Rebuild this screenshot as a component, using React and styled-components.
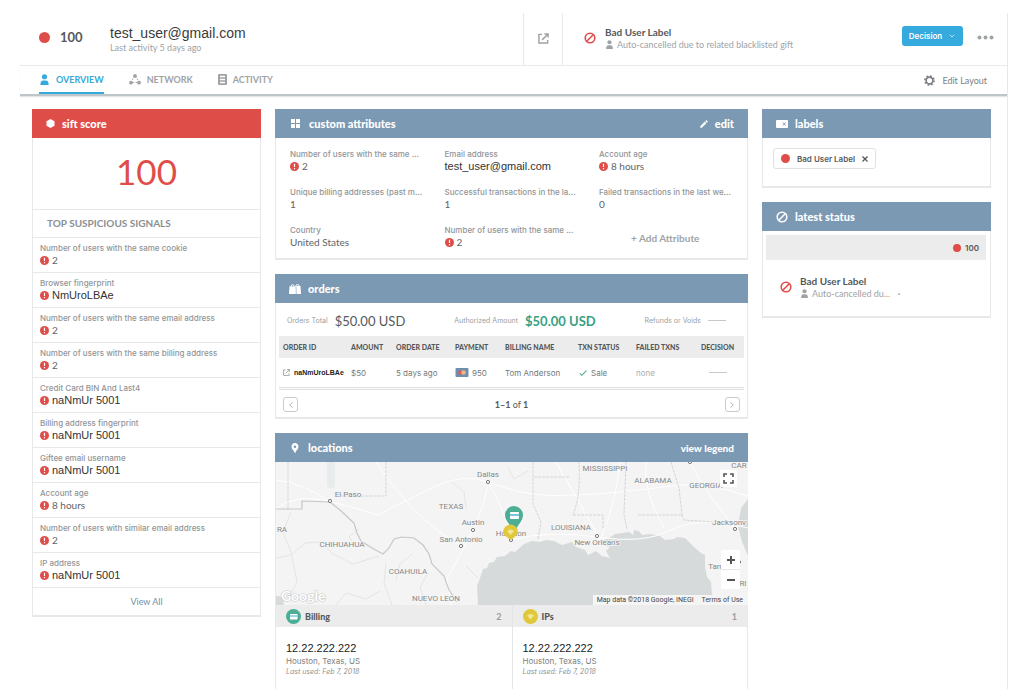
import React from 'react';
import styled, { createGlobalStyle } from 'styled-components';
import { MdEdit, MdLocationPin, MdCheck } from 'react-icons/md';
import { FiChevronLeft, FiChevronRight, FiChevronDown } from 'react-icons/fi';

const GlobalStyle = createGlobalStyle`
    * {
        box-sizing: border-box;
    }
    body {
        margin: 0;
        background-color: #fff;
        color: #55595b;
        font-family: Lato, 'Open Sans', sans-serif;
        font-size: 10px;
    }
    button {
        font-family: inherit;
        padding: 0;
        border: 0;
        background: none;
        cursor: pointer;
    }
    a {
        color: inherit;
        text-decoration: none;
    }
    h1, h2, h3, p, dl, dd, ul {
        margin: 0;
        padding: 0;
    }
    svg {
        display: block;
        flex: none;
    }
`;

const RED = '#df4d49';
const BLUE = '#7b99b3';
const plain = "'Liberation Sans', Arial, sans-serif";
const small = "Inter, 'Open Sans', sans-serif";

const Page = styled.div`
    margin: 13px 16px 10px 20px;
    border-right: 1px solid #e6e8e9;
`;

const Header = styled.header`
    display: flex;
    height: 53px;
    border-bottom: 1px solid #e8e9e9;
`;

const UserArea = styled.div`
    flex: 1;
    display: flex;
    align-items: center;
    padding: 0 0 4px 19px;
`;

const Dot = styled.span`
    flex: none;
    width: ${props => props.$size}px;
    height: ${props => props.$size}px;
    border-radius: 50%;
    background-color: ${RED};
`;

const HeaderScore = styled.strong`
    width: 50px;
    margin-left: 10px;
    font-size: 13px;
    line-height: 16px;
`;

const UserName = styled.h1`
    padding-top: 3px;
    font-family: ${plain};
    font-size: 14px;
    font-weight: 400;
    line-height: 18px;
    color: #3b3b3b;
`;

const Muted = styled.p`
    display: flex;
    align-items: center;
    gap: 3px;
    font-size: 9px;
    line-height: 11px;
    color: #a0a3a5;
`;

const OpenLink = styled.a`
    display: flex;
    align-items: center;
    justify-content: center;
    width: 40px;
    padding-bottom: 2px;
    border: solid #e8e9e9;
    border-width: 0 1px;
    color: #a0a3a5;
`;

const StatusArea = styled.div`
    display: flex;
    align-items: center;
    width: 444px;
    padding: 0 13px 2px 21px;
    gap: 9px;
    color: ${RED};
`;

const StatusText = styled.div`
    flex: 1;
    min-width: 0;
    color: #55595b;
`;

const StatusName = styled.h3`
    font-size: 10px;
    line-height: 13px;
    font-weight: 700;
`;

const DecisionButton = styled.button`
    display: flex;
    align-items: center;
    justify-content: center;
    gap: 6px;
    width: 61px;
    height: 20px;
    margin-bottom: 4px;
    border-radius: 3px;
    background-color: #36a9dd;
    color: #fff;
    font-family: ${small};
    font-size: 8px;
    font-weight: 600;
`;

const MoreButton = styled.button`
    display: flex;
    margin: 0 0 2px 5px;
    color: #a0a3a5;
`;

const TabBar = styled.nav`
    display: flex;
    align-items: stretch;
    height: 30px;
    padding: 0 20px 0 19px;
    gap: 25px;
    border-bottom: 2px solid #bfc6c9;
    box-shadow: 0 1px 1px #e3e6e7;
`;

const Tab = styled.a`
    display: flex;
    align-items: center;
    gap: 6px;
    font-size: 9px;
    font-weight: 700;
    color: ${props => (props.$active ? '#36a9dd' : '#a0a3a5')};
    border-bottom: 2px solid ${props => (props.$active ? '#36a9dd' : 'transparent')};
`;

const EditLayout = styled.button`
    display: flex;
    align-items: center;
    gap: 7px;
    margin-left: auto;
    font-size: 9px;
    color: #7b7f82;
`;

const Columns = styled.main`
    display: grid;
    grid-template-columns: 229px minmax(0, 1fr) 229px;
    gap: 14px;
    align-items: start;
    padding: 13px 16px 0 12px;
`;

const Column = styled.div`
    display: flex;
    flex-direction: column;
    gap: 14px;
`;

const Card = styled.section`
    border: 1px solid #e6e8e9;
    border-top: 0;
    border-bottom-width: ${props => (props.$open ? 0 : 2)}px;
`;

const CardHeader = styled.header`
    display: flex;
    align-items: center;
    height: 29px;
    margin: 0 -1px;
    padding: 0 14px;
    gap: 7px;
    background-color: ${props => props.$color || BLUE};
    color: #fff;
`;

const CardTitle = styled.h2`
    font-size: 11px;
    line-height: 14px;
    font-weight: 900;
`;

const HeaderButton = styled.button`
    display: flex;
    align-items: center;
    gap: 6px;
    margin-left: auto;
    font-size: ${props => (props.$large ? 11 : 10)}px;
    font-weight: 900;
    color: #fff;
`;

const BigScore = styled.p`
    height: 72px;
    padding-top: 13px;
    text-align: center;
    font-size: 35px;
    line-height: 40px;
    color: ${RED};
    border-bottom: 1px solid #e6e8e9;
`;

const SignalsTitle = styled.h3`
    height: 28px;
    padding-left: 14px;
    font-size: 10px;
    line-height: 27px;
    font-weight: 700;
    color: #8b8f92;
    border-bottom: 1px solid #e6e8e9;
`;

const Signal = styled.li`
    list-style: none;
    height: 35px;
    padding: 5px 7px;
    border-bottom: 1px solid #e6e8e9;
`;

const FieldLabel = styled.p`
    font-family: ${small};
    font-size: 8px;
    line-height: 11px;
    font-weight: 500;
    color: #929597;
    white-space: nowrap;
`;

const FieldValue = styled.p`
    display: flex;
    align-items: center;
    gap: 3px;
    font-family: ${props => (props.$plain ? plain : 'inherit')};
    font-size: ${props => (props.$plain ? 11 : 10)}px;
    line-height: 12px;
    color: ${props => (props.$plain ? '#333' : '#5f6365')};
`;

const ViewAll = styled.a`
    display: block;
    line-height: 27px;
    text-align: center;
    font-size: 9px;
    color: #7390a8;
`;

const Attributes = styled.div`
    display: grid;
    grid-template-columns: 1fr 1fr 148px;
    grid-auto-rows: 38px;
    padding: 11px 0 0 14px;
    height: 120px;
`;

const AddAttribute = styled.button`
    justify-self: start;
    margin: 0 0 12px 32px;
    font-size: 10px;
    font-weight: 700;
    color: #a0a3a5;
`;

const Totals = styled.dl`
    display: flex;
    align-items: center;
    justify-content: space-between;
    height: 33px;
    padding: 2px 21px 0 11px;
`;

const Total = styled.div`
    display: flex;
    align-items: center;
    gap: 7px;
    color: #9b9ea0;
    font-family: ${small};
    font-size: 7px;
    dd {
        font-family: Lato, sans-serif;
        font-size: 13px;
        color: ${props => (props.$green ? '#37a184' : '#55595b')};
        font-weight: ${props => (props.$green ? 700 : 400)};
    }
`;

const Dash = styled.span`
    display: block;
    width: 18px;
    height: 1px;
    background-color: #c6c9cb;
`;

const TableWrap = styled.div`
    margin: 0 3px;
    border-bottom: 3px double #dcdedf;
`;

const Table = styled.table`
    width: 100%;
    table-layout: fixed;
    border-collapse: collapse;
    font-family: ${small};
    font-size: 8px;
    white-space: nowrap;
    th {
        height: 22px;
        padding: 0 4px;
        background-color: #ececec;
        text-align: left;
        font-family: Lato, sans-serif;
        font-size: 7px;
        font-weight: 900;
    }
    td {
        height: 29px;
        padding: 0 4px;
        color: #75797b;
    }
`;

const Empty = styled.span`
    color: #a9acae;
`;

const Inline = styled.span`
    display: flex;
    align-items: center;
    gap: 3px;
`;

const DashCell = styled.div`
    padding-left: 8px;
`;

const OrderId = styled.a`
    display: flex;
    align-items: center;
    gap: 4px;
    font-family: ${plain};
    font-size: 7px;
    font-weight: 700;
    color: #222;
    svg {
        color: #a0a3a5;
    }
`;

const CardNumber = styled.span`
    font-size: 8px;
`;

const Pager = styled.div`
    display: flex;
    align-items: center;
    justify-content: space-between;
    height: 27px;
    padding: 2px 7px 0;
    font-size: 9px;
`;

const PagerButton = styled.button`
    display: flex;
    align-items: center;
    justify-content: center;
    width: 15px;
    height: 15px;
    border: 1px solid #c9cccd;
    border-radius: 3px;
    color: #a0a3a5;
`;

const MapArea = styled.div`
    position: relative;
    height: 143px;
    overflow: hidden;
    margin-right: -1px;
`;

const MapControls = styled.div`
    position: absolute;
    right: ${props => props.$right}px;
    top: ${props => props.$top}px;
    display: flex;
    flex-direction: column;
    border-radius: 1px;
    background-color: #fff;
`;

const MapButton = styled.button`
    display: flex;
    align-items: center;
    justify-content: center;
    width: ${props => props.$width}px;
    height: ${props => props.$height}px;
    color: #555;
    & + & {
        border-top: 1px solid #e6e6e6;
    }
`;

const Attribution = styled.p`
    position: absolute;
    right: 0;
    bottom: 0;
    display: flex;
    gap: 8px;
    padding: 0 5px 0 4px;
    font-family: Roboto, sans-serif;
    font-size: 7px;
    line-height: 10px;
    color: #444;
    background-color: #f5f5f5;
`;

const Places = styled.div`
    display: grid;
    grid-template-columns: 1fr 1fr;
`;

const Place = styled.div`
    & + & {
        border-left: 1px solid #e3e5e6;
    }
`;

const PlaceHeader = styled.div`
    display: flex;
    align-items: center;
    gap: 4px;
    height: 22px;
    padding: 0 10px;
    background-color: #ececec;
    font-size: 9px;
    font-weight: 900;
    span {
        margin-left: auto;
        color: #999c9e;
        font-weight: 700;
    }
`;

const PlaceBody = styled.div`
    height: 62px;
    padding: 15px 10px 0;
    font-family: ${small};
    font-size: 8px;
    line-height: 12px;
    color: #7b7f82;
    strong {
        display: block;
        font-family: ${plain};
        font-size: 11px;
        line-height: 13px;
        font-weight: 400;
        color: #222;
    }
    em {
        display: block;
        font-size: 7px;
        line-height: 10px;
        color: #8f9294;
    }
`;

const LabelsBody = styled.div`
    height: 48px;
    padding: 10px;
`;

const Chip = styled.div`
    display: inline-flex;
    align-items: center;
    height: 21px;
    padding: 0 7px;
    gap: 7px;
    border: 1px solid #dfe1e2;
    border-radius: 3px;
    font-family: ${small};
    font-size: 8px;
    font-weight: 600;
`;

const StatusBody = styled.div`
    height: 85px;
    padding: 4px 4px 0 3px;
`;

const StatusScore = styled.div`
    display: flex;
    align-items: center;
    justify-content: flex-end;
    gap: 4px;
    height: 25px;
    padding-right: 7px;
    background-color: #ececec;
    font-family: ${small};
    font-size: 8px;
    font-weight: 600;
`;

const StatusRow = styled.div`
    display: flex;
    align-items: center;
    gap: 8px;
    padding: 15px 0 0 14px;
    color: ${RED};
`;

function PersonIcon({ size = 10 }) {
    return (
        <svg width={size} height={size} viewBox="0 0 12 12" fill="currentColor" aria-hidden="true">
            <circle cx="6" cy="3" r="2.8" />
            <path d="M1.5 12C1.5 8.500 2.500 7 4.500 7h3C9.500 7 10.500 8.500 10.500 12z" />
        </svg>
    );
}

function BlockIcon() {
    return (
        <svg width="12" height="12" viewBox="0 0 12 12" fill="none" stroke="currentColor" strokeWidth="1.600" aria-hidden="true">
            <circle cx="6" cy="6" r="4.800" />
            <path d="M2.800 9.200 9.200 2.800" />
        </svg>
    );
}

function NetworkIcon() {
    return (
        <svg width="12" height="11" viewBox="0 0 12 11" aria-hidden="true">
            <path d="M5.500 2 2 8.500h8L6.500 2" fill="none" stroke="currentColor" strokeWidth="1" strokeDasharray="1.500 1.500" />
            <circle cx="6" cy="2" r="1.900" fill="currentColor" />
            <circle cx="2" cy="8.700" r="1.900" fill="currentColor" />
            <circle cx="10" cy="8.700" r="1.900" fill="currentColor" />
        </svg>
    );
}

function ActivityIcon() {
    return (
        <svg width="9" height="11" viewBox="0 0 9 11" aria-hidden="true">
            <rect width="9" height="11" rx="1" fill="#a0a3a5" />
            <path d="M2 2.500h5M2 5.500h5M2 8.500h5" stroke="#fff" strokeWidth="1.300" />
        </svg>
    );
}

function GearIcon() {
    return (
        <svg width="11" height="11" viewBox="0 0 12 12" fill="none" stroke="currentColor" aria-hidden="true">
            <circle cx="6" cy="6" r="3.700" strokeWidth="1.800" />
            <circle cx="6" cy="6" r="5" strokeWidth="1.700" strokeDasharray="1.960 1.960" />
        </svg>
    );
}

function OpenIcon({ size }) {
    return (
        <svg width={size} height={size} viewBox="0 0 12 12" fill="none" stroke="currentColor" strokeWidth="1.600" aria-hidden="true">
            <path d="M4.500 1.500H1v9.500h9.500V7.500M7 1h4v4M11 1 4.500 7.500" />
        </svg>
    );
}

function AlertIcon() {
    return (
        <svg width="9" height="9" viewBox="0 0 9 9" aria-label="Warning">
            <circle cx="4.500" cy="4.500" r="4.500" fill={RED} />
            <path d="M4.500 1.800v3.200M4.500 6v1.300" stroke="#fff" strokeWidth="1.200" />
        </svg>
    );
}

function HexIcon() {
    return (
        <svg width="9" height="9" viewBox="0 0 9 9" fill="currentColor" aria-hidden="true">
            <path d="M4.500 0 8.500 2.200v4.600L4.500 9l-4-2.200V2.200z" />
        </svg>
    );
}

function TilesIcon() {
    return (
        <svg width="13" height="9" viewBox="-2 0 13 9" fill="currentColor" aria-hidden="true">
            <path d="M0 0h4v4H0zM5 0h4v4H5zM0 5h4v4H0zM5 5h4v4H5z" />
        </svg>
    );
}

function BagsIcon() {
    return (
        <svg width="12" height="10" viewBox="0 0 12 10" aria-hidden="true">
            <path d="M.5 2.500h6V10H0zM6 2h5.500l.5 8H6z" fill="#fff" />
            <path d="M2 3V1.500q1.500-1.500 3 0V3M7 2.500V1.200q1.500-1.500 3 0v1.300" fill="none" stroke="#fff" />
            <path d="M7 2.500 7.300 10" stroke={BLUE} strokeWidth=".6" />
        </svg>
    );
}

function LabelIcon() {
    return (
        <svg width="12" height="8" viewBox="0 0 12 8" aria-hidden="true">
            <rect width="12" height="8" rx="1" fill="#fff" />
            <path d="m7 2.500 2.500 3M9.500 2.500 7 5.500" stroke={BLUE} />
        </svg>
    );
}

function CardBadge() {
    return (
        <svg width="15" height="15" viewBox="0 0 15 15" aria-hidden="true">
            <circle cx="7.500" cy="7.500" r="7.500" fill="#4caf94" />
            <rect x="4" y="5" width="7.500" height="5.500" rx=".6" fill="#fff" />
            <path d="M4 7h7.500" stroke="#74c7df" strokeWidth="1.400" />
        </svg>
    );
}

function WifiBadge() {
    return (
        <svg width="15" height="15" viewBox="0 0 15 15" aria-hidden="true">
            <circle cx="7.500" cy="7.500" r="7.500" fill="#e1c83a" />
            <path d="M4 6.500q3.500-3 7 0L7.500 10.500z" fill="#f3e694" />
        </svg>
    );
}

const cities = [
    { name: 'Dallas', x: 212, y: 15, cx: 212, cy: 20 },
    { name: 'El Paso', x: 72, y: 35, cx: 54, cy: 39 },
    { name: 'Austin', x: 197, y: 63, cx: 197, cy: 68 },
    { name: 'San Antonio', x: 185, y: 80, cx: 185, cy: 84 },
    { name: 'Houston', x: 235, y: 74, cx: 235, cy: 78 },
    { name: 'New Orleans', x: 321, y: 83, cx: 321, cy: 74 },
    { name: 'Jacksonv', x: 453, y: 63, cx: 459, cy: 67 },
    { name: 'Tam', x: 440, y: 107, cx: 463, cy: 100 },
];

const regions = [
    { name: 'TEXAS', x: 175, y: 47 },
    { name: 'CHIHUAHUA', x: 66, y: 85 },
    { name: 'COAHUILA', x: 132, y: 112 },
    { name: 'NUEVO LEON', x: 160, y: 139 },
    { name: 'RA', x: 6, y: 70 },
    { name: 'MISSISSIPPI', x: 329, y: 9 },
    { name: 'ALABAMA', x: 377, y: 21 },
    { name: 'GEORGIA', x: 430, y: 26 },
    { name: 'LOUISIANA', x: 295, y: 68 },
    { name: 'CAR', x: 463, y: 6 },
    { name: 'RI', x: 467, y: 124 },
];

function RegionMap() {
    return (
        <svg width="100%" height="143" viewBox="0 0 472 143" preserveAspectRatio="xMidYMid slice" role="img" aria-label="Map of the Gulf coast">
            <rect width="472" height="143" fill="#f4f4f4" />
            <g fill="#d7dadb">
                <path d="M202 143 201 124l3-8 3-9 4-1 2-5 5-1 3-5 8-1 6-5 4 1 9-8 8-3 8 1 6-2 8 1 8 4 10-3 4 5 9 3 3 5 8-4 6 5 8 2-4-7 4-4-6-2-3-4 8-3 6-4 14-2 4 3 1-5 5 1 3 4 8-1 10 2 5 4 9-1 3-2 8 1 8 8 8 7 4 2v12l2 10 4 5 1 12 5 7 8 5z" />
                <path d="m472 37-7 9-3 18 4 16 6 14z" />
                <path d="M0 134q8-1 8 9H0z" />
                <path d="M51 0h8v24q-2 5-8 0z" fill="#e9ecec" />
            </g>
            <g fill="none" stroke="#fff" strokeWidth="1">
                <path d="M0 47q20-16 52-8t50 14q30-16 58-29t52-4 44 12 62 0 76-8 78 10" />
                <path d="M212 20q-2 20-14 45t-11 22l-16 30 4 26M212 20q16 26 24 57M235 78q38-10 86-3t74-7 77-2" />
                <path d="M0 18q30 4 54 22M280 0q20 34 42 74M344 0q-4 40-18 74M414 0q15 30 46 67M370 0q-4 28 18 66M100 0q40 60 86 84" />
            </g>
            <g fill="none" stroke="#e3e5e5" strokeWidth="1">
                <path d="M0 96l15-3 14-12 16-1 12 12 20 10 26-8M60 143l10-12 20 6 14-8M116 143l-8-22 2-20M150 143l-6-18 8-14M190 104l12 12M15 50l-8 20 8 20 6 30-10 20" />
                <path d="m80 84-7-9 10-8M136 92l-12 10-4 16M176 20l12 10 2 16M232 5l6 12 14-8" />
            </g>
            <g fill="none" stroke="#d4d6d6" strokeDasharray="3 1">
                <path d="M12 0v47M110 0v34H65M257 0v42l8 18-3 17M297 53h30v14M297 53q8-20 6-53M350 0l-2 53 3 14M362 53h44l2 5 29 2M395 0l8 26 3 27M258 15h36" />
            </g>
            <path d="M0 47h26v-8l28 1 10 8 14 13 3 10 4 8 11 7 11 6 6-6 5-9 8-2 12 1 9 7 6 9 3 10 12 12 5 14 8 12" fill="none" stroke="#c5c8c8" strokeWidth="1.200" />
            <g fontFamily="Roboto, sans-serif" fontSize="8" fill="#858788" stroke="#f6f6f6" strokeWidth="1.500" paintOrder="stroke" textAnchor="middle">
                {regions.map(region => (
                    <text key={region.name} x={region.x} y={region.y}>{region.name}</text>
                ))}
                {cities.map(city => (
                    <text key={city.name} x={city.x} y={city.y}>{city.name}</text>
                ))}
            </g>
            <g fill="#fff" stroke="#777" strokeWidth="1">
                {cities.map(city => (
                    <circle key={city.name} cx={city.cx} cy={city.cy} r="1.600" />
                ))}
                <circle cx="414" cy="0" r="1.600" />
            </g>
            <text x="5" y="139" fontFamily="Lato, sans-serif" fontSize="14" fontWeight="700" fill="#fff" stroke="#c8cacb" strokeWidth="1.200" paintOrder="stroke">Google</text>
            <path d="M229 53a9 9 0 1 1 18 0c0 6-5 9-8 16-4-5-10-10-10-16z" fill="#4caf94" />
            <rect x="234" y="50" width="9" height="7" rx="1" fill="#fff" />
            <path d="M234 53h9" stroke="#74c7df" strokeWidth="2" />
            <path d="M227 70a7.500 7.500 0 1 1 15 0c0 3-4 5-7 8-4-3-8-5-8-8z" fill="#e1c83a" />
            <path d="M231 69q3.500-3 7 0l-3.500 4z" fill="#f3e694" />
        </svg>
    );
}

const signals = [
    { label: 'Number of users with the same cookie', value: '2' },
    { label: 'Browser fingerprint', value: 'NmUroLBAe', plain: true },
    { label: 'Number of users with the same email address', value: '2' },
    { label: 'Number of users with the same billing address', value: '2' },
    { label: 'Credit Card BIN And Last4', value: 'naNmUr 5001', plain: true },
    { label: 'Billing address fingerprint', value: 'naNmUr 5001', plain: true },
    { label: 'Giftee email username', value: 'naNmUr 5001', plain: true },
    { label: 'Account age', value: '8 hours' },
    { label: 'Number of users with similar email address', value: '2' },
    { label: 'IP address', value: 'naNmUr 5001', plain: true },
];

const attributes = [
    { label: 'Number of users with the same ...', value: '2', alert: true },
    { label: 'Email address', value: 'test_user@gmail.com', plain: true },
    { label: 'Account age', value: '8 hours', alert: true },
    { label: 'Unique billing addresses (past m...', value: '1' },
    { label: 'Successful transactions in the la...', value: '1' },
    { label: 'Failed transactions in the last we...', value: '0' },
    { label: 'Country', value: 'United States' },
    { label: 'Number of users with the same ...', value: '2', alert: true },
];

const orderColumns = [
    { title: 'ORDER ID', width: 68 },
    { title: 'AMOUNT', width: 45 },
    { title: 'ORDER DATE', width: 59 },
    { title: 'PAYMENT', width: 50 },
    { title: 'BILLING NAME', width: 73 },
    { title: 'TXN STATUS', width: 58 },
    { title: 'FAILED TXNS', width: 65 },
    { title: 'DECISION', width: 47 },
];

function Field({ label, value, alert, plain: isPlain }) {
    return (
        <>
            <FieldLabel>{label}</FieldLabel>
            <FieldValue $plain={isPlain}>
                {alert && <AlertIcon />}
                {value}
            </FieldValue>
        </>
    );
}

function TopBar() {
    return (
        <Header>
            <UserArea>
                <Dot $size={11} />
                <HeaderScore>100</HeaderScore>
                <div>
                    <UserName>test_user@gmail.com</UserName>
                    <Muted>Last activity 5 days ago</Muted>
                </div>
            </UserArea>
            <OpenLink href="#" aria-label="Open in new window"><OpenIcon size={11} /></OpenLink>
            <StatusArea>
                <BlockIcon />
                <StatusText>
                    <StatusName>Bad User Label</StatusName>
                    <Muted><PersonIcon size={9} />Auto-cancelled due to related blacklisted gift</Muted>
                </StatusText>
                <DecisionButton>Decision <FiChevronDown size={8} /></DecisionButton>
                <MoreButton aria-label="More">
                    <svg width="17" height="5" viewBox="0 0 17 5" fill="currentColor">
                        <circle cx="2.500" cy="2.500" r="2" />
                        <circle cx="8.500" cy="2.500" r="2" />
                        <circle cx="14.500" cy="2.500" r="2" />
                    </svg>
                </MoreButton>
            </StatusArea>
        </Header>
    );
}

function Orders() {
    return (
        <Card>
            <CardHeader>
                <BagsIcon />
                <CardTitle>orders</CardTitle>
            </CardHeader>
            <Totals>
                <Total><dt>Orders Total</dt><dd>$50.00 USD</dd></Total>
                <Total $green><dt>Authorized Amount</dt><dd>$50.00 USD</dd></Total>
                <Total><dt>Refunds or Voids</dt><dd><Dash /></dd></Total>
            </Totals>
            <TableWrap>
                <Table>
                    <colgroup>
                        {orderColumns.map(column => <col key={column.title} width={column.width} />)}
                    </colgroup>
                    <thead>
                        <tr>
                            {orderColumns.map(column => <th key={column.title}>{column.title}</th>)}
                        </tr>
                    </thead>
                    <tbody>
                        <tr>
                            <td><OrderId href="#"><OpenIcon size={7} />naNmUroLBAe</OrderId></td>
                            <td>$50</td>
                            <td>5 days ago</td>
                            <td>
                                <Inline>
                                    <svg width="14" height="9" viewBox="0 0 13 9" aria-label="Mastercard">
                                        <rect width="13" height="9" rx="1" fill="#6d8fae" />
                                        <circle cx="5" cy="4.500" r="2.300" fill="#e05a52" />
                                        <circle cx="8" cy="4.500" r="2.300" fill="#edb487" />
                                    </svg>
                                    <CardNumber>950</CardNumber>
                                </Inline>
                            </td>
                            <td>Tom Anderson</td>
                            <td><Inline><MdCheck size={10} color="#37a184" />Sale</Inline></td>
                            <td><Empty>none</Empty></td>
                            <td><DashCell><Dash /></DashCell></td>
                        </tr>
                    </tbody>
                </Table>
            </TableWrap>
            <Pager>
                <PagerButton aria-label="Previous page"><FiChevronLeft size={10} /></PagerButton>
                <span><b>1–1</b> of <b>1</b></span>
                <PagerButton aria-label="Next page"><FiChevronRight size={10} /></PagerButton>
            </Pager>
        </Card>
    );
}

function Locations() {
    return (
        <Card $open>
            <CardHeader>
                <MdLocationPin size={12} />
                <CardTitle>locations</CardTitle>
                <HeaderButton>view legend</HeaderButton>
            </CardHeader>
            <MapArea>
                <RegionMap />
                <MapControls $right={11} $top={8}>
                    <MapButton $width={17} $height={17} aria-label="Full screen">
                        <svg width="11" height="11" viewBox="0 0 11 11" fill="none" stroke="currentColor" strokeWidth="1.600">
                            <path d="M4 1H1v3M7 1h3v3M10 7v3H7M4 10H1V7" />
                        </svg>
                    </MapButton>
                </MapControls>
                <MapControls $right={8} $top={88}>
                    <MapButton $width={19} $height={19} aria-label="Zoom in">
                        <svg width="8" height="8" viewBox="0 0 8 8" stroke="currentColor" strokeWidth="2">
                            <path d="M0 4h8M4 0v8" />
                        </svg>
                    </MapButton>
                    <MapButton $width={19} $height={20} aria-label="Zoom out">
                        <svg width="8" height="8" viewBox="0 0 8 8" stroke="currentColor" strokeWidth="2">
                            <path d="M0 4h8" />
                        </svg>
                    </MapButton>
                </MapControls>
                <Attribution>
                    <span>Map data ©2018 Google, INEGI</span>
                    <a href="#">Terms of Use</a>
                </Attribution>
            </MapArea>
            <Places>
                <Place>
                    <PlaceHeader><CardBadge />Billing<span>2</span></PlaceHeader>
                    <PlaceBody>
                        <strong>12.22.222.222</strong>
                        Houston, Texas, US
                        <em>Last used: Feb 7, 2018</em>
                    </PlaceBody>
                </Place>
                <Place>
                    <PlaceHeader><WifiBadge />IPs<span>1</span></PlaceHeader>
                    <PlaceBody>
                        <strong>12.22.222.222</strong>
                        Houston, Texas, US
                        <em>Last used: Feb 7, 2018</em>
                    </PlaceBody>
                </Place>
            </Places>
        </Card>
    );
}

export default function App() {
    return (
        <>
            <GlobalStyle />
            <Page>
                <TopBar />
                <TabBar>
                    <Tab href="#" $active><PersonIcon size={11} />OVERVIEW</Tab>
                    <Tab href="#"><NetworkIcon />NETWORK</Tab>
                    <Tab href="#"><ActivityIcon />ACTIVITY</Tab>
                    <EditLayout><GearIcon />Edit Layout</EditLayout>
                </TabBar>
                <Columns>
                    <Card>
                        <CardHeader $color={RED}>
                            <HexIcon />
                            <CardTitle>sift score</CardTitle>
                        </CardHeader>
                        <BigScore>100</BigScore>
                        <SignalsTitle>TOP SUSPICIOUS SIGNALS</SignalsTitle>
                        <ul>
                            {signals.map(signal => (
                                <Signal key={signal.label}><Field {...signal} alert /></Signal>
                            ))}
                        </ul>
                        <ViewAll href="#">View All</ViewAll>
                    </Card>
                    <Column>
                        <Card>
                            <CardHeader>
                                <TilesIcon />
                                <CardTitle>custom attributes</CardTitle>
                                <HeaderButton $large><MdEdit size={10} />edit</HeaderButton>
                            </CardHeader>
                            <Attributes>
                                {attributes.map((attribute, i) => (
                                    <div key={i}><Field {...attribute} /></div>
                                ))}
                                <AddAttribute>+ Add Attribute</AddAttribute>
                            </Attributes>
                        </Card>
                        <Orders />
                        <Locations />
                    </Column>
                    <Column>
                        <Card>
                            <CardHeader>
                                <LabelIcon />
                                <CardTitle>labels</CardTitle>
                            </CardHeader>
                            <LabelsBody>
                                <Chip>
                                    <Dot $size={9} />
                                    Bad User Label
                                    <button aria-label="Remove label">
                                        <svg width="6" height="6" viewBox="0 0 6 6" stroke="#55595b" strokeWidth="1.300">
                                            <path d="m.5.500 5 5M5.500.500l-5 5" />
                                        </svg>
                                    </button>
                                </Chip>
                            </LabelsBody>
                        </Card>
                        <Card>
                            <CardHeader>
                                <BlockIcon />
                                <CardTitle>latest status</CardTitle>
                            </CardHeader>
                            <StatusBody>
                                <StatusScore><Dot $size={8} />100</StatusScore>
                                <StatusRow>
                                    <BlockIcon />
                                    <StatusText>
                                        <StatusName>Bad User Label</StatusName>
                                        <Muted><PersonIcon size={9} />Auto-cancelled du... &nbsp;<b>·</b></Muted>
                                    </StatusText>
                                </StatusRow>
                            </StatusBody>
                        </Card>
                    </Column>
                </Columns>
            </Page>
        </>
    );
}
